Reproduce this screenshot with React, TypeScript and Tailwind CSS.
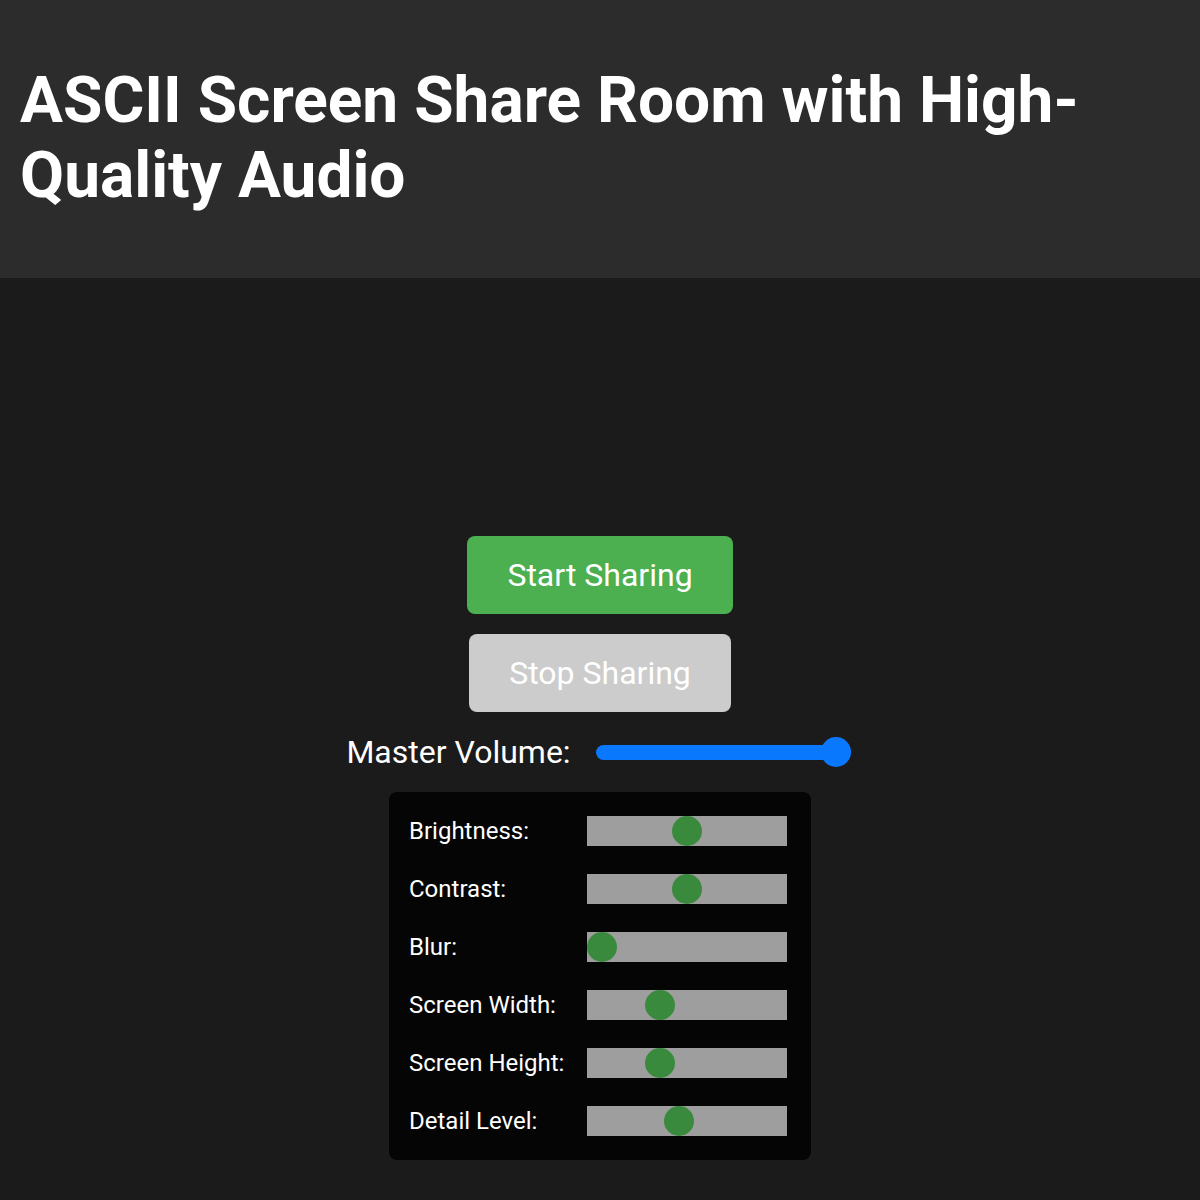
import React from "react";

const controls = [
  { label: "Brightness:", value: 0.5 },
  { label: "Contrast:", value: 0.5 },
  { label: "Blur:", value: 0 },
  { label: "Screen Width:", value: 0.34 },
  { label: "Screen Height:", value: 0.34 },
  { label: "Detail Level:", value: 0.45 },
];

function GreenSlider({ value }: { value: number }) {
  // thumb travels 170px across a 200px track
  return (
    <div className="relative h-[30px] w-[200px] bg-[#9e9e9e]">
      <div
        className="absolute top-0 h-[30px] w-[30px] rounded-full bg-[#3a8a3e]"
        style={{ left: `${Math.round(value * 170)}px` }}
      />
    </div>
  );
}

export default function App() {
  return (
    <div className="min-h-[1200px] bg-[#1b1b1b] font-['Roboto',sans-serif] text-white">
      <header className="h-[278px] bg-[#2c2c2c] px-5 pt-[63px]">
        <h1 className="text-[64px] font-bold leading-[75px]">
          ASCII Screen Share Room with High-Quality Audio
        </h1>
      </header>

      <main className="flex flex-col items-center pt-[258px]">
        <button className="h-[78px] w-[266px] rounded-lg bg-[#4caf50] text-[32px] leading-[37px] text-white">
          Start Sharing
        </button>
        <button
          disabled
          className="mt-5 h-[78px] w-[262px] rounded-lg bg-[#cccccc] text-[32px] leading-[37px] text-white"
        >
          Stop Sharing
        </button>

        <div className="mt-[22px] flex h-[36px] items-center gap-[25px] pr-[3px]">
          <span className="text-[32px] leading-[36px]">Master Volume:</span>
          <div className="relative flex h-[30px] w-[255px] items-center">
            <div className="h-[15px] w-full rounded-full bg-[#0a78fd]" />
            <div className="absolute right-0 top-0 h-[30px] w-[30px] rounded-full bg-[#0a78fd]" />
          </div>
        </div>

        <div className="mt-[22px] flex w-[422px] flex-col gap-[28px] rounded-lg bg-[#050505] px-5 py-6">
          {controls.map((c) => (
            <div key={c.label} className="flex h-[30px] items-center">
              <span className="w-[178px] text-[24px] leading-[30px]">
                {c.label}
              </span>
              <GreenSlider value={c.value} />
            </div>
          ))}
        </div>
      </main>
    </div>
  );
}
